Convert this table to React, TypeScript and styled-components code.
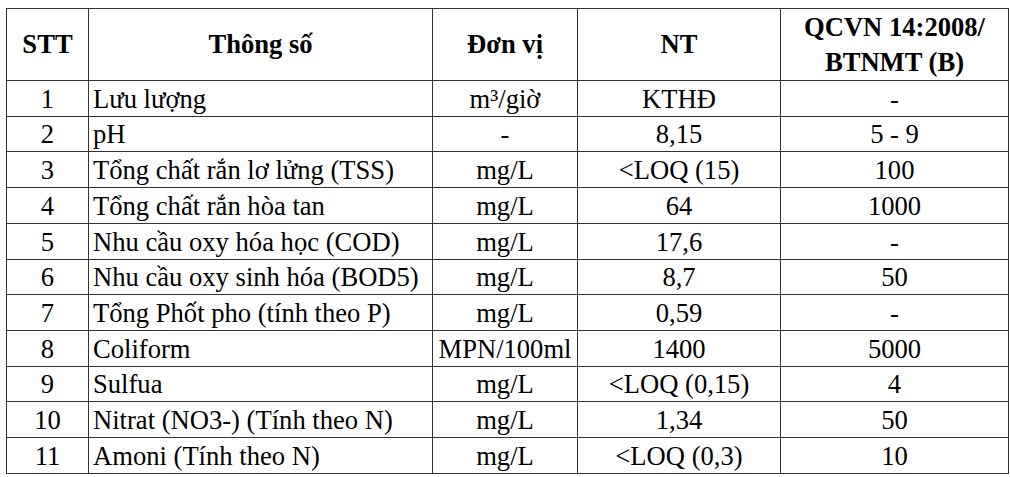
import React from "react";
import styled, { createGlobalStyle } from "styled-components";

const GlobalStyle = createGlobalStyle`
  * {
    box-sizing: border-box;
  }
  body {
    margin: 0;
    background: #ffffff;
    font-family: "Liberation Serif", "Times New Roman", serif;
    color: #000000;
  }
`;

type Row = {
  stt: string;
  name: string;
  unit: string;
  nt: string;
  limit: string;
};

const rows: Row[] = [
  { stt: "1", name: "Lưu lượng", unit: "m³/giờ", nt: "KTHĐ", limit: "-" },
  { stt: "2", name: "pH", unit: "-", nt: "8,15", limit: "5 - 9" },
  { stt: "3", name: "Tổng chất rắn lơ lửng (TSS)", unit: "mg/L", nt: "<LOQ (15)", limit: "100" },
  { stt: "4", name: "Tổng chất rắn hòa tan", unit: "mg/L", nt: "64", limit: "1000" },
  { stt: "5", name: "Nhu cầu oxy hóa học (COD)", unit: "mg/L", nt: "17,6", limit: "-" },
  { stt: "6", name: "Nhu cầu oxy sinh hóa (BOD5)", unit: "mg/L", nt: "8,7", limit: "50" },
  { stt: "7", name: "Tổng Phốt pho (tính theo P)", unit: "mg/L", nt: "0,59", limit: "-" },
  { stt: "8", name: "Coliform", unit: "MPN/100ml", nt: "1400", limit: "5000" },
  { stt: "9", name: "Sulfua", unit: "mg/L", nt: "<LOQ (0,15)", limit: "4" },
  { stt: "10", name: "Nitrat (NO3-) (Tính theo N)", unit: "mg/L", nt: "1,34", limit: "50" },
  { stt: "11", name: "Amoni (Tính theo N)", unit: "mg/L", nt: "<LOQ (0,3)", limit: "10" },
];

const App = () => {
  return (
    <>
      <GlobalStyle />
      <Page>
        <Table>
          <colgroup>
            <col style={{ width: 82 }} />
            <col style={{ width: 344 }} />
            <col style={{ width: 145 }} />
            <col style={{ width: 203 }} />
            <col style={{ width: 228 }} />
          </colgroup>
          <thead>
            <HeadRow>
              <HeadCell>STT</HeadCell>
              <HeadCell>Thông số</HeadCell>
              <HeadCell>Đơn vị</HeadCell>
              <HeadCell>NT</HeadCell>
              <HeadCell>
                QCVN 14:2008/
                <br />
                BTNMT (B)
              </HeadCell>
            </HeadRow>
          </thead>
          <tbody>
            {rows.map((row) => (
              <BodyRow key={row.stt}>
                <Cell>{row.stt}</Cell>
                <Cell $left>{row.name}</Cell>
                <Cell>{row.unit}</Cell>
                <Cell>{row.nt}</Cell>
                <Cell>{row.limit}</Cell>
              </BodyRow>
            ))}
          </tbody>
        </Table>
      </Page>
    </>
  );
};

export default App;

const serif = `"Liberation Serif", "Times New Roman", serif`;

const Page = styled.div`
  padding: 8px 0 0 6px;
`;

const Table = styled.table`
  width: 1002px;
  table-layout: fixed;
  border-collapse: collapse;
  font-family: ${serif};
  font-size: 26.6px;
  color: #000000;
`;

const HeadRow = styled.tr`
  height: 72px;
`;

const HeadCell = styled.th`
  border: 1px solid #333333;
  font-weight: 700;
  line-height: 35px;
  text-align: center;
  vertical-align: middle;
  padding: 0 2px;
  white-space: nowrap;
`;

const BodyRow = styled.tr`
  height: 35.73px;
`;

const Cell = styled.td<{ $left?: boolean }>`
  border: 1px solid #333333;
  text-align: ${(p) => (p.$left ? "left" : "center")};
  vertical-align: bottom;
  padding: 0 2px 2px ${(p) => (p.$left ? "4px" : "2px")};
  line-height: 30px;
  white-space: nowrap;
  overflow: hidden;
`;
